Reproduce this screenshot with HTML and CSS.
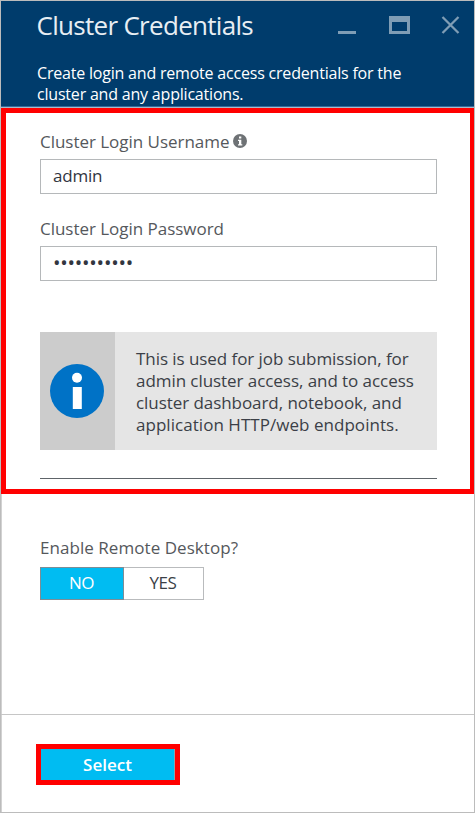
FILE: index.html
```html
<!DOCTYPE html>
<html lang="en">
<head>
<meta charset="utf-8">
<title>Cluster Credentials</title>
<link rel="stylesheet" href="styles.css">
</head>
<body>
<main class="blade">
  <header class="header">
    <div class="titlebar">
      <h1 class="title">Cluster Credentials</h1>
      <svg class="controls" width="124" height="22" viewBox="0 0 124 22" fill="none" stroke="#7f9db5">
        <path d="M0 18.5H18" stroke-width="3"/>
        <path d="M51 2H72V8H51Z" fill="#7f9db5" stroke="none"/>
        <path d="M52.5 5V18.5H70.5V5" stroke-width="3"/>
        <path d="M104.5 3L120.5 19M120.5 3L104.5 19" stroke-width="2.3"/>
      </svg>
    </div>
    <p class="subtitle">Create login and remote access credentials for the<br>cluster and any applications.</p>
  </header>
  <section class="login">
    <label class="label" for="user"><span>Cluster Login Username</span>
      <svg class="hint" width="14" height="14" viewBox="0 0 14 14"><circle cx="7" cy="7" r="7" fill="#6e7275"/><path d="M6 2.5h2.3v2H6zM5 5.7h3.3v4.5h1v1.3H5v-1.3h1V7H5z" fill="#fff"/></svg>
    </label>
    <input class="field" id="user" type="text" value="admin">
    <div class="label second">Cluster Login Password</div>
    <div class="field password">•••••••••••</div>
    <div class="notice">
      <div class="notice-icon">
        <svg width="54" height="54" viewBox="0 0 54 54"><circle cx="27" cy="27" r="27" fill="#0072c6"/><circle cx="27" cy="13.7" r="5" fill="#fff"/><path d="M22.8 23h9v22h-9z" fill="#fff"/></svg>
      </div>
      <p class="notice-text">This is used for job submission, for<br>admin cluster access, and to access<br>cluster dashboard, notebook, and<br><span class="wide">application HTTP/web endpoints.</span></p>
    </div>
    <hr class="rule">
  </section>
  <section class="remote">
    <div class="label remote-label">Enable Remote Desktop?</div>
    <div class="toggle"><button class="option active">NO</button><button class="option">YES</button></div>
  </section>
  <footer class="footer">
    <button class="select">Select</button>
  </footer>
</main>
</body>
</html>
```
FILE: styles.css
```css
* { box-sizing: border-box; }
body { margin: 0; background: #fff; font-family: "Open Sans", "Noto Sans", sans-serif; }
.blade {
  width: 475px; height: 813px; border: 1px solid #bcbcbc;
  display: flex; flex-direction: column; color: #3b3f47;
}
.header {
  height: 107px; padding: 0 12px 0 36px; background: #003c6c; color: #fff;
  border-bottom: 1px solid #a9bbc9; box-shadow: inset 0 -1px #35699a;
}
.titlebar { display: flex; justify-content: space-between; height: 50px; padding-top: 6px; }
.title { margin: 0 0 0 -.5px; font-size: 26px; line-height: 36px; font-weight: 400; letter-spacing: -.7px; white-space: nowrap; color: #e8eef3; }
.controls { margin: 7px 0 0; flex: none; }
.subtitle { margin: 12px 0 0; font-size: 16px; line-height: 21px; letter-spacing: -.2px; white-space: nowrap; }
.login { height: 386px; border: 5px solid #f00; border-right-width: 4px; padding: 17px 33px 0 34px; }
.label { display: flex; align-items: center; gap: 5px; height: 24px; font-size: 17px; line-height: 24px; color: #55585c; white-space: nowrap; letter-spacing: -.03px; }
.remote-label { letter-spacing: .05px; }
.hint { margin: -2px 0 0 -1px; }
.field {
  display: block; width: 397px; height: 35px; border: 1px solid #b5b8ba; background: #fff;
  padding: 0 12px 2px; font-family: inherit; font-size: 17px; line-height: 30px; color: #32363f; outline: none;
  margin: 5px 0 0; letter-spacing: -.2px;
}
.second { margin-top: 23px; }
.password { font-size: 20px; line-height: 32px; letter-spacing: -.25px; }
.notice { display: flex; height: 118px; margin-top: 51px; background: #e5e5e5; }
.notice-icon { width: 75px; flex: none; background: #ccc; padding: 32px 0 0 10px; }
.notice-text { margin: 16px 0 0 21px; font-size: 17px; line-height: 22px; letter-spacing: -.06px; white-space: nowrap; }
.wide { letter-spacing: .04px; }
.rule { margin: 28px 0 0; border: 0; height: 1px; background: #5e6469; }
.remote { height: 220px; padding: 42px 39px 0; box-shadow: inset 1px 0 #d2d2d2; }
.toggle { display: flex; width: 164px; height: 33px; margin-top: 7px; }
.option { width: 80px; border: 1px solid #b9bbbd; border-left: 0; background: #fff; font: 17px/30px "Open Sans", sans-serif; color: #3b3f47; padding: 0 1px 1px 0; letter-spacing: -.5px; }
.active { width: 84px; border: 1px solid #7d8d96; background: #00bcf2; color: #fff; }
.footer { flex: 1; border-top: 1px solid #c6c6c6; padding: 29px 0 0 35px; box-shadow: inset 1px 0 #d2d2d2; }
.select { display: block; width: 144px; height: 41px; border: 5px solid #f00; background: #00bcf2; box-shadow: inset -1px 0 #8aa5ae; color: #fff; font: 600 17px/30px "Open Sans", sans-serif; padding: 0 1px 0 0; }
```
